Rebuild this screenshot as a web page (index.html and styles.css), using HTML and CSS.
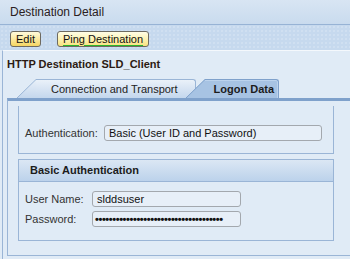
FILE: index.html
```html
<!DOCTYPE html>
<html lang="en">
<head>
    <meta charset="UTF-8">
    <meta name="viewport" content="width=device-width, initial-scale=1.0">
    <title>Destination Detail</title>
    <link rel="stylesheet" href="styles.css">
</head>
<body>
    <header class="title-bar">Destination Detail</header>

    <nav class="toolbar">
        <button class="btn">Edit</button>
        <button class="btn btn-focus"><span>Ping Destination</span></button>
    </nav>

    <main class="content">
        <h1 class="dest-title">HTTP Destination SLD_Client</h1>

        <div class="tabstrip">
            <div class="tab">
                <svg class="tab-slant" width="19" height="19" viewBox="0 0 19 19">
                    <defs>
                        <linearGradient id="g1" x1="0" y1="0" x2="0" y2="1">
                            <stop offset="0" stop-color="#eaf1f9"/>
                            <stop offset="1" stop-color="#c4d7ed"/>
                        </linearGradient>
                    </defs>
                    <polygon points="0,19 19,0 19,19" fill="url(#g1)"/>
                    <line x1="0" y1="19" x2="19" y2="0.5" stroke="#9ab5d6" stroke-width="1"/>
                </svg>
                <span class="tab-label">Connection and Transport</span>
            </div>
            <div class="tab tab-active">
                <svg class="tab-slant" width="19" height="19" viewBox="0 0 19 19">
                    <polygon points="0,19 19,0 19,19" fill="#a7c3e3"/>
                    <line x1="0" y1="19" x2="19" y2="0.5" stroke="#7fa1cb" stroke-width="1"/>
                </svg>
                <span class="tab-label">Logon Data</span>
            </div>
        </div>

        <section class="panel">
            <div class="group group-plain">
                <div class="row">
                    <label class="lbl lbl-wide">Authentication:</label>
                    <div class="field field-wide">Basic (User ID and Password)</div>
                </div>
            </div>

            <div class="group">
                <div class="group-head">Basic Authentication</div>
                <div class="group-body">
                    <div class="row">
                        <label class="lbl">User Name:</label>
                        <div class="field">slddsuser</div>
                    </div>
                    <div class="row">
                        <label class="lbl">Password:</label>
                        <div class="field field-pass">&bull;&bull;&bull;&bull;&bull;&bull;&bull;&bull;&bull;&bull;&bull;&bull;&bull;&bull;&bull;&bull;&bull;&bull;&bull;&bull;&bull;&bull;&bull;&bull;&bull;&bull;&bull;&bull;&bull;&bull;&bull;&bull;&bull;&bull;&bull;&bull;&bull;</div>
                    </div>
                </div>
            </div>
        </section>
    </main>
</body>
</html>
```

FILE: styles.css
```css
    body {
        margin: 0;
        font-family: "Liberation Sans", Arial, sans-serif;
        font-size: 11px;
        color: #222;
        background: #e0ebf6;
        overflow: hidden;
    }

    .title-bar {
        height: 24px;
        line-height: 24px;
        padding-left: 10px;
        font-size: 12px;
        color: #2a2020;
        background: linear-gradient(180deg, #d8e5f3 0%, #c9dbee 100%);
        border-bottom: 1px solid #97b3d5;
    }

    .toolbar {
        height: 25px;
        box-sizing: border-box;
        padding: 6px 0 0 10px;
        display: flex;
        gap: 16px;
        align-items: flex-start;
        background-color: #c6d9ee;
        background-image: radial-gradient(circle, #d3e2f3 0.6px, transparent 1px);
        background-size: 4px 4px;
    }

    .btn {
        height: 16px;
        padding: 0 5px;
        font-family: "Liberation Sans", Arial, sans-serif;
        font-size: 11px;
        color: #111;
        background: linear-gradient(180deg, #fffbdc 0%, #fbe9a0 50%, #f5d561 100%);
        border: 1px solid #6e6a60;
        border-radius: 3px;
        line-height: 13px;
    }

    .btn-focus {
        background: linear-gradient(180deg, #fffde6 0%, #fdf3b4 50%, #f8e27e 100%);
    }

    .btn-focus span {
        text-decoration: underline;
        text-decoration-color: #2cb52c;
        text-decoration-thickness: 1px;
        text-underline-offset: 2px;
    }

    .content {
        margin-left: 2px;
        border-left: 1px solid #9ab5d6;
        border-top: 1px solid #f4f8fc;
        min-height: 220px;
    }

    .dest-title {
        margin: 0;
        padding: 7px 0 0 4px;
        font-size: 11px;
        font-weight: bold;
        line-height: 13px;
        color: #2b1a12;
    }

    .tabstrip {
        display: flex;
        margin-top: 8px;
        padding-left: 14px;
        height: 19px;
    }

    .tab {
        display: flex;
        align-items: flex-end;
    }

    .tab-slant {
        display: block;
        flex: none;
    }

    .tab-label {
        height: 18px;
        line-height: 18px;
        padding: 0 17px 0 15px;
        color: #222;
        background: linear-gradient(180deg, #eaf1f9 0%, #c4d7ed 100%);
        border-top: 1px solid #9ab5d6;
        border-right: 1px solid #9ab5d6;
        border-top-right-radius: 3px;
    }

    .tab-active {
        position: relative;
        margin-left: -10px;
    }

    .tab-active .tab-label {
        padding: 0 4px 0 9px;
        font-weight: bold;
        color: #1c1c1c;
        background: #a7c3e3;
        border-top-color: #7fa1cb;
        border-right-color: #7fa1cb;
        box-shadow: inset 0 1px 0 #bcd3ed, inset -1px 0 0 #bcd3ed;
    }

    .panel {
        margin-left: 4px;
        border-top: 3px solid #7fa1cb;
        border-left: 1px solid #9ab5d6;
        border-bottom: 1px solid #9ab5d6;
        padding: 5px 0 14px 10px;
    }

    .group {
        width: 316px;
        box-sizing: border-box;
        border: 1px solid #9ab5d6;
        margin-top: 5px;
    }

    .group-plain {
        margin-top: 0;
        border-top: none;
        padding: 19px 0 12px 6px;
    }

    .group-head {
        height: 22px;
        line-height: 21px;
        padding-left: 11px;
        font-weight: bold;
        color: #1c1c1c;
        background: linear-gradient(180deg, #dbe7f4 0%, #bcd2eb 100%);
        border-bottom: 1px solid #9ab5d6;
        box-sizing: border-box;
    }

    .group-body {
        padding: 9px 0 13px 6px;
        display: flex;
        flex-direction: column;
        gap: 4px;
    }

    .row {
        display: flex;
        align-items: center;
    }

    .lbl {
        width: 67px;
        color: #333;
    }

    .lbl-wide {
        width: 79px;
    }

    .field {
        width: 149px;
        height: 16px;
        box-sizing: border-box;
        padding-left: 4px;
        line-height: 14px;
        color: #111;
        background: #e7eff8;
        border: 1px solid #a3a8ae;
        border-radius: 3px;
        white-space: nowrap;
        overflow: hidden;
    }

    .field-wide {
        width: 218px;
    }

    .field-pass {
        padding-left: 2px;
        letter-spacing: -0.4px;
        font-weight: bold;
    }
```
